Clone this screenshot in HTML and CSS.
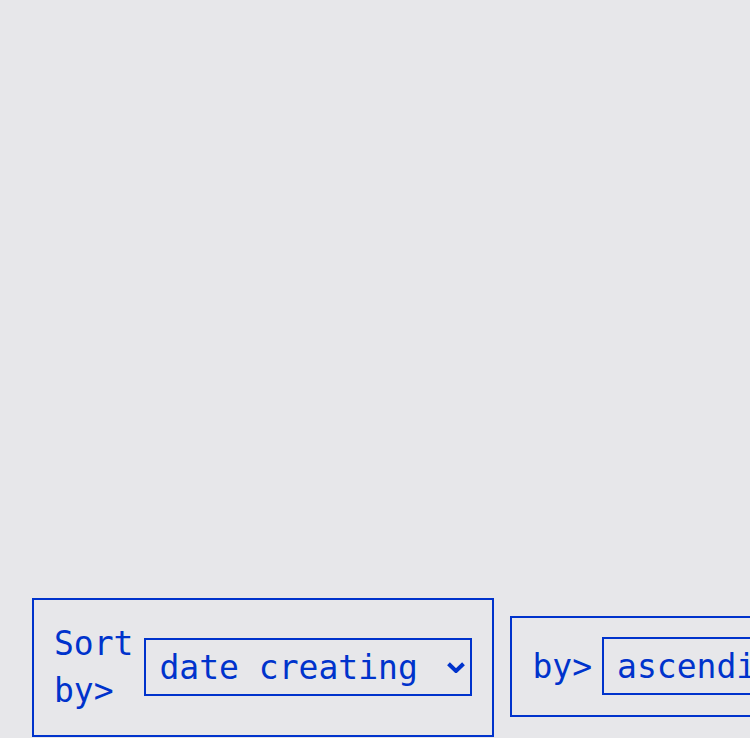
FILE: index.html
```html
<!DOCTYPE html>
<html lang="en">
<head>
<meta charset="utf-8">
<title>Sort</title>
<link rel="stylesheet" href="styles.css">
</head>
<body>
<div class="page">
  <div class="spacer"></div>
  <div class="controls">
    <div class="field field-tall">
      <span class="label label-wrap">Sort by&gt;</span>
      <div class="select select-wide">
        <span class="select-text">date creating</span>
        <svg class="chevron" width="18" height="11" viewBox="0 0 18 11" aria-hidden="true">
          <path d="M1.5 1.8 L9 9 L16.5 1.8" fill="none" stroke="#0033cc" stroke-width="4"/>
        </svg>
      </div>
    </div>
    <div class="field field-short">
      <span class="label">by&gt;</span>
      <div class="select">
        <span class="select-text">ascending</span>
        <svg class="chevron" width="18" height="11" viewBox="0 0 18 11" aria-hidden="true">
          <path d="M1.5 1.8 L9 9 L16.5 1.8" fill="none" stroke="#0033cc" stroke-width="4"/>
        </svg>
      </div>
    </div>
  </div>
</div>
</body>
</html>
```
FILE: styles.css
```css
html, body {
  margin: 0;
  padding: 0;
  overflow: hidden;
  background: #e7e7ea;
}
body {
  font-family: "DejaVu Sans Mono", "Liberation Mono", monospace;
  font-size: 33px;
  line-height: 47px;
  color: #0033cc;
}
.page {
  padding: 0 0 0 32px;
}
.spacer {
  height: 598px;
}
.controls {
  display: flex;
  align-items: flex-start;
  gap: 16px;
  width: max-content;
}
.field {
  display: flex;
  align-items: center;
  gap: 10px;
  border: 2px solid #0033cc;
  padding: 20px;
  flex-shrink: 0;
}
.field-tall {
  gap: 11px;
  padding: 20px 20px 21px 20px;
}
.field-short {
  margin-top: 18px;
  padding: 19px 20px 20px 20px;
}
.label {
  white-space: nowrap;
}
.label-wrap {
  white-space: normal;
  width: min-content;
}
.select {
  box-sizing: border-box;
  height: 58px;
  border: 2px solid #0033cc;
  display: flex;
  align-items: center;
  padding: 0 7px 0 13px;
  white-space: nowrap;
}
.select-wide {
  width: 328px;
  justify-content: space-between;
}
.select-text {
  display: block;
}
.select .chevron {
  margin-left: 29px;
  flex-shrink: 0;
}
```
